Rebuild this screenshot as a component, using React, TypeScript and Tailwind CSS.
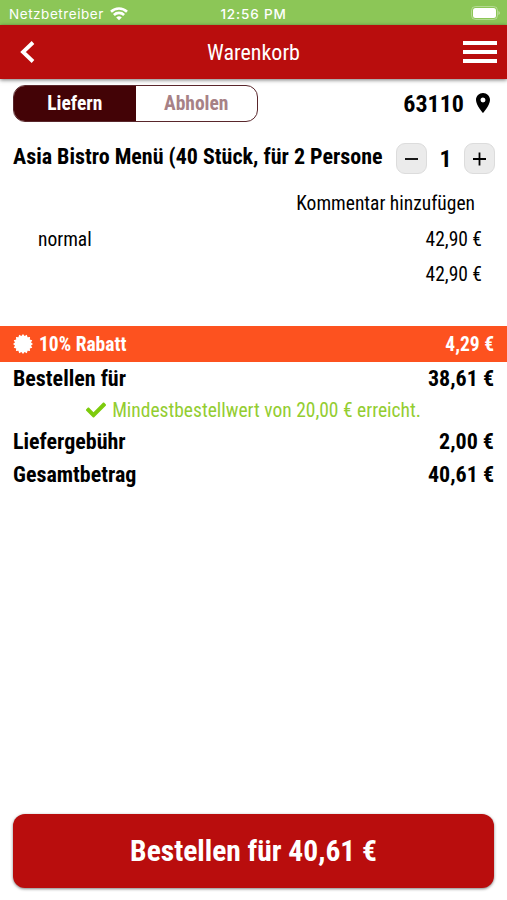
import React, { useState } from 'react';
import { FaCheck } from 'react-icons/fa';
import { MdLocationOn } from 'react-icons/md';

const totals = {
  discount: '4,29 €',
  order: '38,61 €',
  delivery: '2,00 €',
  sum: '40,61 €',
};

const StatusBar = () => (
  <div className="h-[25px] bg-[#8cc657] text-white flex items-center justify-between px-[9px] font-[Inter,sans-serif] text-[13.5px]">
    <div className="w-[160px] flex items-center gap-[6px] pt-[3px]">
      <span className="tracking-[0.55px]">Netzbetreiber</span>
      <WifiIcon />
    </div>
    <span className="pt-[3px] font-medium tracking-[0.85px]">12:56 PM</span>
    <div className="w-[160px] flex justify-end pt-[1px] pl-px">
      <BatteryIcon />
    </div>
  </div>
);

const App = () => {
  const [mode, setMode] = useState('liefern');
  const [count, setCount] = useState(1);

  return (
    <div className="h-[900px] w-full bg-white text-black flex flex-col overflow-hidden font-['Roboto_Condensed',Roboto,sans-serif] [font-stretch:75%]">
      <StatusBar />

      <header className="h-[54px] shrink-0 bg-[#b90d0d] text-white grid grid-cols-3 items-center px-[10px] shadow-[0_1px_4px_rgba(0,0,0,0.55)]">
        <svg className="ml-[10px]" width="15" height="22" viewBox="0 0 15 22" fill="none" stroke="currentColor" strokeWidth="3.8">
          <path d="M13 1.500 3 11l10 9.500" />
        </svg>
        <h1 className="text-[22px] text-center">Warenkorb</h1>
        <div className="flex flex-col gap-[5px] items-end pb-[1px]">
          <span className="w-[34px] h-[4px] bg-white" />
          <span className="w-[34px] h-[4px] bg-white" />
          <span className="w-[34px] h-[4px] bg-white" />
        </div>
      </header>

      <div className="h-[49px] shrink-0 flex items-center justify-between pl-[13px] pr-[15px]">
        <div className="w-[245px] h-[37px] flex border border-[#59262b] rounded-[12px] overflow-hidden text-[19.5px] leading-[35px] font-bold">
          <button
            className={mode === 'liefern' ? 'flex-1 bg-[#430306] text-white' : 'flex-1 text-[#a78186]'}
            onClick={() => setMode('liefern')}
          >
            Liefern
          </button>
          <button
            className={mode === 'abholen' ? 'flex-1 bg-[#430306] text-white' : 'flex-1 text-[#a78186]'}
            onClick={() => setMode('abholen')}
          >
            Abholen
          </button>
        </div>
        <div className="flex items-center gap-[10px]">
          <span className="text-[24px] font-bold">63110</span>
          <MdLocationOn size={24} className="-mx-[3px] -mt-[1px]" />
        </div>
      </div>

      <div className="h-[61px] shrink-0 flex items-center justify-between pl-[13px] pr-[12px]">
        <span className="text-[22px] font-bold whitespace-nowrap -mt-[5px]">Asia Bistro Menü (40 Stück, für 2 Persone</span>
        <div className="flex items-center">
          <StepButton onClick={() => setCount(Math.max(1, count - 1))} path="M2 8h13" />
          <span className="w-[37px] text-center text-[24px] leading-[30px] font-bold">{count}</span>
          <StepButton onClick={() => setCount(count + 1)} path="M2 8h13M8.500 1.500v13" />
        </div>
      </div>

      <div className="text-[19.5px] leading-[35px] shrink-0 pl-[38px] pr-[25px]">
        <div className="text-right pr-[7px] leading-[30px] pb-[2px]">Kommentar hinzufügen</div>
        <div className="flex justify-between pt-[1px]">
          <span>normal</span>
          <span>42,90 €</span>
        </div>
        <div className="text-right">42,90 €</div>
      </div>

      <div className="mt-[34px] h-[36px] shrink-0 bg-[#fd521f] text-white text-[19.5px] font-bold flex items-center justify-between px-[13px]">
        <div className="flex items-center gap-[6px]">
          <BadgeIcon />
          <span className="pt-[2px]">10% Rabatt</span>
        </div>
        <span className="pt-[2px]">{totals.discount}</span>
      </div>

      <TotalRow label="Bestellen für" value={totals.order} />
      <div className="h-[30px] shrink-0 flex items-center justify-center gap-[6px] text-[19.5px] text-[#93cd31]">
        <FaCheck size={20} className="text-[#7dcb0c]" />
        <span className="pt-[1px]">Mindestbestellwert von 20,00 € erreicht.</span>
      </div>
      <TotalRow label="Liefergebühr" value={totals.delivery} />
      <TotalRow label="Gesamtbetrag" value={totals.sum} />

      <button className="mt-auto mb-[12px] mx-[13px] h-[74px] shrink-0 bg-[#b90d0d] rounded-[12px] text-white text-[29.5px] font-bold shadow-[0_1px_3px_rgba(0,0,0,0.5)]">
        Bestellen für {totals.sum}
      </button>
    </div>
  );
};

const TotalRow = ({ label, value }: { label: string; value: string }) => (
  <div className="h-[33px] shrink-0 flex items-center justify-between px-[13px] pb-px text-[22px] font-bold">
    <span>{label}</span>
    <span>{value}</span>
  </div>
);

const StepButton = ({ path, onClick }: { path: string; onClick: () => void }) => (
  <button
    className="w-[31px] h-[31px] bg-[#ebebeb] border border-[#dcdcdc] rounded-[9px] flex items-center justify-center"
    onClick={onClick}
  >
    <svg width="17" height="16" viewBox="0 0 17 16" stroke="black" strokeWidth="1.8">
      <path d={path} />
    </svg>
  </button>
);

// 16 teeth, alternating outer and inner radius
const badgePoints = Array.from({ length: 32 }, (_, i) => {
  const r = i % 2 === 0 ? 10 : 8.2;
  const a = (i * Math.PI) / 16;
  return `${(10 + r * Math.sin(a)).toFixed(2)},${(10 - r * Math.cos(a)).toFixed(2)}`;
}).join(' ');

const BadgeIcon = () => (
  <svg className="-mt-[1px]" width="20" height="20" viewBox="0 0 20 20" fill="currentColor">
    <polygon points={badgePoints} />
  </svg>
);

const WifiIcon = () => (
  <svg className="-mt-[1px]" width="18" height="14" viewBox="0 0 18 14" fill="none" stroke="currentColor" strokeWidth="2.6">
    <path d="M1 4.800a11.500 11.500 0 0 1 16 0" />
    <path d="M3.900 8a7.300 7.300 0 0 1 10.200 0" />
    <path d="M9 13.300 6.200 10.500a4 4 0 0 1 5.600 0z" fill="currentColor" stroke="none" />
  </svg>
);

const BatteryIcon = () => (
  <svg className="-mr-[2px]" width="29" height="14" viewBox="0 0 29 14">
    <rect x="0.500" y="0.500" width="26" height="13" rx="4" fill="none" stroke="white" strokeOpacity="0.35" />
    <rect x="2" y="2" width="23" height="10" rx="2.500" fill="white" />
    <path d="M27.500 5v4a2.200 2.200 0 0 0 0-4" fill="white" fillOpacity="0.5" />
  </svg>
);

export default App;
